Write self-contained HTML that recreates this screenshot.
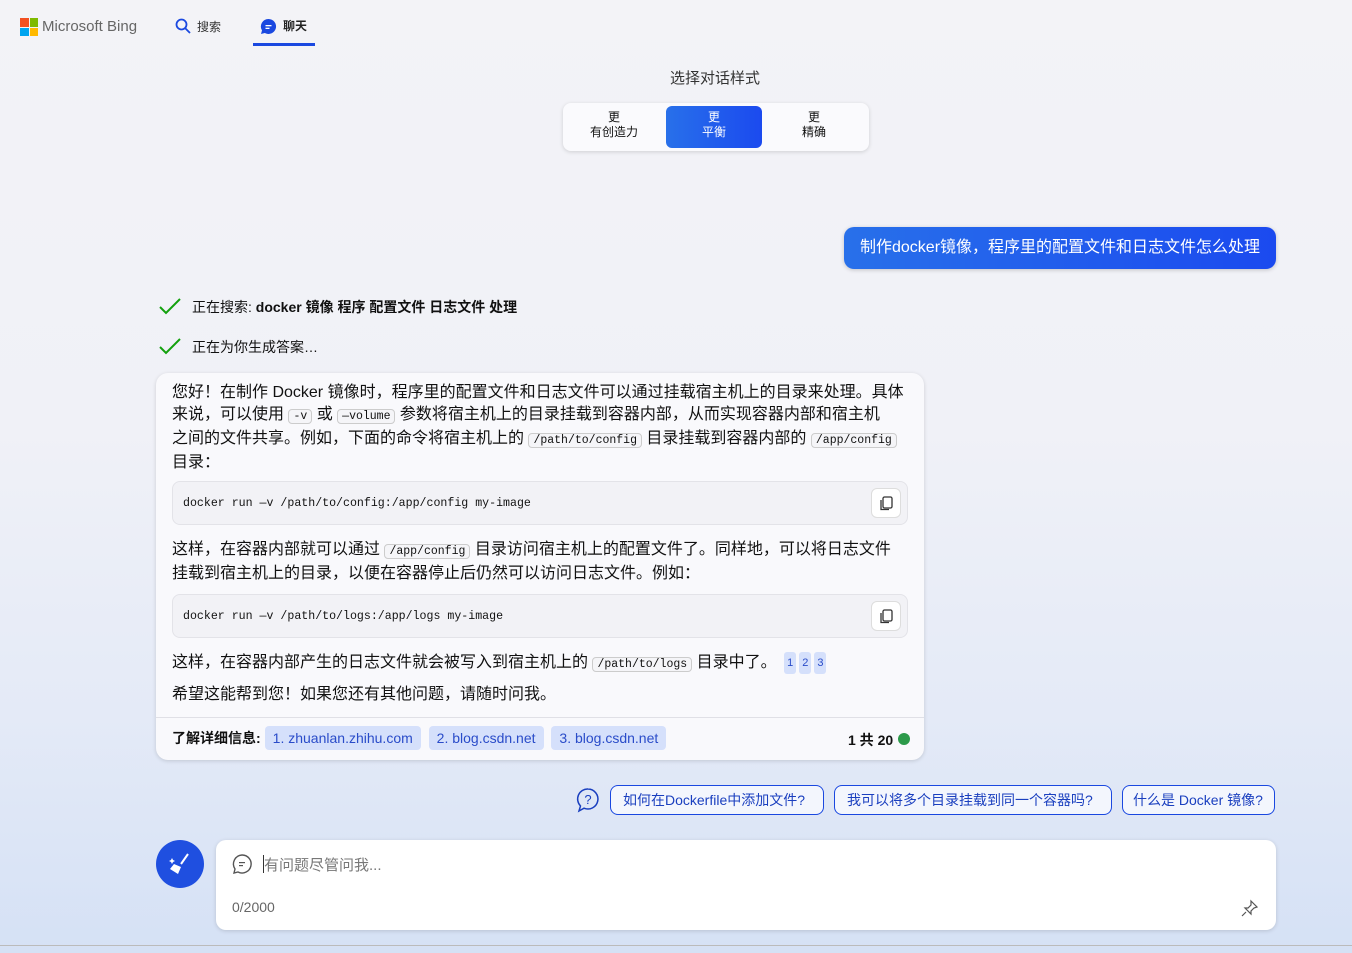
<!DOCTYPE html>
<html><head><meta charset="utf-8"><style>
*{margin:0;padding:0;box-sizing:border-box}
body{width:1352px;height:953px;overflow:hidden;position:relative;font-family:"Liberation Sans","Noto Sans CJK SC",sans-serif;color:#111;background:linear-gradient(180deg,#f3f3f7 0%,#f0f1f7 45%,#e4eaf7 75%,#d5e1f5 100%)}
.a{position:absolute}
.mono{font-family:"Liberation Mono","Noto Sans CJK SC",monospace}
code{font-family:"Liberation Mono",monospace;font-size:11.5px;border:1px solid #ccc;border-radius:4px;background:#f5f5f8;padding:0 4px}
.card{left:156px;top:373px;width:768px;height:387px;background:#f9f9fc;border-radius:12px;box-shadow:0 1px 4px rgba(0,0,0,.15)}
.p{position:absolute;left:16px;font-size:16px;line-height:22px;width:734px}
.code{position:absolute;left:16px;width:736px;height:44px;border:1px solid #e3e3e8;background:#f2f2f6;border-radius:8px;font-size:11.6px;padding:15px 10px}
.cp{position:absolute;right:6px;top:6px;width:30px;height:30px;border:1px solid #ddd;background:#fff;border-radius:6px}
.chip{display:inline-block;background:#d5e0fb;color:#2a4cc9;font-size:14px;padding:4px 8px;border-radius:4px;margin-right:4px}
.sug{position:absolute;top:785px;height:30px;border:1px solid #1a48e0;border-radius:8px;background:#f3f6fd;color:#1a3fbf;font-size:14px;line-height:28px;padding:0 12px;white-space:nowrap}
.sup{display:inline-block;background:#d5e0fb;color:#2a4cc9;font-size:11px;padding:0 3px;border-radius:3px;vertical-align:top;margin-left:3px}
</style></head><body>
<div class="a" style="left:20px;top:18px;width:18px;height:18px">
<div class="a" style="left:0;top:0;width:8.5px;height:8.5px;background:#f25022"></div>
<div class="a" style="left:9.5px;top:0;width:8.5px;height:8.5px;background:#7fba00"></div>
<div class="a" style="left:0;top:9.5px;width:8.5px;height:8.5px;background:#00a4ef"></div>
<div class="a" style="left:9.5px;top:9.5px;width:8.5px;height:8.5px;background:#ffb900"></div></div>
<div class="a" style="left:42px;top:18px;font-size:15px;color:#666">Microsoft Bing</div>
<svg class="a" style="left:175px;top:18px" width="16" height="16" viewBox="0 0 16 16"><circle cx="6.5" cy="6.5" r="5" fill="none" stroke="#1a48e0" stroke-width="1.8"/><line x1="10" y1="10" x2="15" y2="15" stroke="#1a48e0" stroke-width="1.8"/></svg>
<div class="a" style="left:197px;top:18px;font-size:12px;color:#333">搜索</div>
<svg class="a" style="left:260px;top:18px" width="17" height="17" viewBox="0 0 17 17"><path d="M8.5 1a7.5 7.5 0 1 1-3.7 14L1 16l1-3.6A7.5 7.5 0 0 1 8.5 1z" fill="#1a48e0"/><rect x="5.5" y="7" width="6" height="1.3" fill="#fff"/><rect x="5.5" y="9.7" width="4" height="1.3" fill="#fff"/></svg>
<div class="a" style="left:283px;top:17px;font-size:12px;color:#222;font-weight:bold">聊天</div>
<div class="a" style="left:253px;top:43px;width:62px;height:3px;background:#1a48e0"></div>

<div class="a" style="left:670px;top:67px;font-size:15px;color:#333">选择对话样式</div>
<div class="a" style="left:563px;top:103px;width:306px;height:48px;background:#fafafd;border-radius:8px;box-shadow:0 1px 4px rgba(0,0,0,.15)"></div>
<div class="a" style="left:566px;top:110px;width:96px;text-align:center;font-size:12px;line-height:15px">更<br>有创造力</div>
<div class="a" style="left:666px;top:106px;width:96px;height:42px;border-radius:6px;background:linear-gradient(90deg,#2870ea,#1b4aef)"></div>
<div class="a" style="left:666px;top:110px;width:96px;text-align:center;font-size:12px;line-height:15px;color:#fff">更<br>平衡</div>
<div class="a" style="left:766px;top:110px;width:96px;text-align:center;font-size:12px;line-height:15px">更<br>精确</div>

<div class="a" style="left:844px;top:227px;width:432px;height:42px;border-radius:10px;background:linear-gradient(90deg,#2870ea,#1b4aef);color:#fff;font-size:16px;line-height:42px;padding-left:16px;box-shadow:0 1px 4px rgba(0,0,0,.2)">制作docker镜像，程序里的配置文件和日志文件怎么处理</div>

<svg class="a" style="left:159px;top:298px" width="22" height="18"><path d="M1 9l6 6L21 1" fill="none" stroke="#13a10e" stroke-width="2"/></svg>
<div class="a" style="left:192px;top:297px;font-size:14px">正在搜索: <b>docker 镜像 程序 配置文件 日志文件 处理</b></div>
<svg class="a" style="left:159px;top:338px" width="22" height="18"><path d="M1 9l6 6L21 1" fill="none" stroke="#13a10e" stroke-width="2"/></svg>
<div class="a" style="left:192px;top:337px;font-size:14px">正在为你生成答案…</div>

<div class="a card">
<div class="p" style="top:9px">您好！在制作 Docker 镜像时，程序里的配置文件和日志文件可以通过挂载宿主机上的目录来处理。具体来说，可以使用 <code>-v</code> 或 <code>—volume</code> 参数将宿主机上的目录挂载到容器内部，从而实现容器内部和宿主机<br>之间的文件共享。例如，下面的命令将宿主机上的 <code>/path/to/config</code> 目录挂载到容器内部的 <code>/app/config</code><br>目录：</div>
<div class="code mono" style="top:108px">docker run —v /path/to/config:/app/config my-image<div class="cp"><svg style="margin:7px 8px" width="13" height="15"><rect x="3" y="1" width="9" height="11" rx="1.5" fill="none" stroke="#333" stroke-width="1.3"/><path d="M1 4v9.5h8" fill="none" stroke="#333" stroke-width="1.3"/></svg></div></div>
<div class="p" style="top:166px">这样，在容器内部就可以通过 <code>/app/config</code> 目录访问宿主机上的配置文件了。同样地，可以将日志文件<br>挂载到宿主机上的目录，以便在容器停止后仍然可以访问日志文件。例如：</div>
<div class="code mono" style="top:221px">docker run —v /path/to/logs:/app/logs my-image<div class="cp"><svg style="margin:7px 8px" width="13" height="15"><rect x="3" y="1" width="9" height="11" rx="1.5" fill="none" stroke="#333" stroke-width="1.3"/><path d="M1 4v9.5h8" fill="none" stroke="#333" stroke-width="1.3"/></svg></div></div>
<div class="p" style="top:279px">这样，在容器内部产生的日志文件就会被写入到宿主机上的 <code>/path/to/logs</code> 目录中了。 <span class="sup">1</span><span class="sup">2</span><span class="sup">3</span></div>
<div class="p" style="top:311px">希望这能帮到您！如果您还有其他问题，请随时问我。</div>
<div class="a" style="left:0;top:344px;width:768px;height:1px;background:#e0e0e6"></div>
<div class="a" style="left:16px;top:353px;font-size:14px"><b style="margin-right:4px">了解详细信息:</b><span class="chip">1. zhuanlan.zhihu.com</span> <span class="chip">2. blog.csdn.net</span> <span class="chip">3. blog.csdn.net</span></div>
<div class="a" style="left:692px;top:357px;font-size:14px;font-weight:bold">1 共 20</div>
<div class="a" style="left:742px;top:360px;width:12px;height:12px;border-radius:50%;background:#2c9a4a"></div>
</div>

<svg class="a" style="left:576px;top:787px" width="24" height="26" viewBox="0 0 24 26"><path d="M12 2a10 10 0 1 1-4 19.2L3 24l1.5-5A10 10 0 0 1 12 2z" fill="none" stroke="#1a3fbf" stroke-width="1.5"/><text x="12" y="17" text-anchor="middle" font-size="13" fill="#1a3fbf" font-family="Liberation Sans">?</text></svg>
<div class="sug" style="left:610px;width:214px">如何在Dockerfile中添加文件?</div>
<div class="sug" style="left:834px;width:278px">我可以将多个目录挂载到同一个容器吗?</div>
<div class="sug" style="left:1122px;width:153px;padding:0 10px">什么是 Docker 镜像?</div>

<div class="a" style="left:156px;top:840px;width:48px;height:48px;border-radius:50%;background:#1f4fe0"></div>
<svg class="a" style="left:166px;top:850px" width="28" height="28" viewBox="0 0 28 28"><path d="M22 4l-7 10" stroke="#fff" stroke-width="2"/><path d="M8 14l7 3-3 7-8-5z" fill="#fff"/><path d="M6 8l1 2 2 1-2 1-1 2-1-2-2-1 2-1z" fill="#fff"/></svg>
<div class="a" style="left:216px;top:840px;width:1060px;height:90px;background:#fff;border-radius:10px;box-shadow:0 1px 4px rgba(0,0,0,.15)"></div>
<svg class="a" style="left:231px;top:853px" width="22" height="22" viewBox="0 0 22 22"><path d="M11 2a9 9 0 1 1-4 17L3 20l1-4A9 9 0 0 1 11 2z" fill="none" stroke="#555" stroke-width="1.4"/><rect x="8" y="9" width="6" height="1.2" fill="#555"/><rect x="8" y="12" width="4" height="1.2" fill="#555"/></svg>
<div class="a" style="left:263px;top:855px;width:1px;height:18px;background:#333"></div>
<div class="a" style="left:264px;top:854px;font-size:15px;color:#777">有问题尽管问我...</div>
<div class="a" style="left:232px;top:899px;font-size:14px;color:#666">0/2000</div>
<svg class="a" style="left:1241px;top:899px" width="18" height="18" viewBox="0 0 18 18"><path d="M10 2l6 6-3 1-3 3 0 3-6-6 3 0 3-3z M5 13l-4 4" fill="none" stroke="#555" stroke-width="1.2"/></svg>
<div class="a" style="left:0;top:945px;width:1352px;height:1px;background:#bbb"></div>
</body></html>
